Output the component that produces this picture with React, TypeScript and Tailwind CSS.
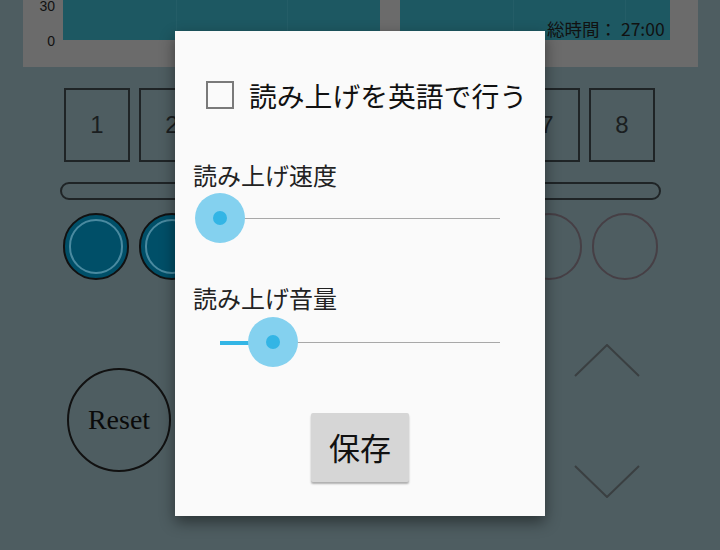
import React from "react";

const jp = { fontFamily: '"Noto Sans CJK JP", "Noto Sans", sans-serif' };

function Slider({ value }: { value: number }) {
  return (
    <div className="relative ml-[45px] h-[52px] w-[280px]">
      <div className="absolute left-0 right-0 top-[25px] h-px bg-[#a8a8a8]" />
      {value > 0 && (
        <div
          className="absolute left-0 top-[24px] h-[4px] bg-[#33b5e5]"
          style={{ width: value }}
        />
      )}
      <div
        className="absolute top-0 h-[50px] w-[50px] rounded-full bg-[#84d1ef]"
        style={{ left: value - 25 }}
      />
      <div
        className="absolute top-[18px] h-[14px] w-[14px] rounded-full bg-[#33b5e5]"
        style={{ left: value - 7 }}
      />
    </div>
  );
}

export default function App() {
  const nums = [1, 2, 3, 4, 5, 6, 7, 8];
  return (
    <div
      className="relative h-[550px] w-[720px] overflow-hidden bg-[#4e5d61]"
      style={{ fontFamily: '"Liberation Sans", "Noto Sans CJK JP", sans-serif' }}
    >
      {/* chart panel */}
      <div className="relative ml-[23px] flex h-[67px] w-[675px] bg-[#6b6b6b]">
        <div className="relative w-[40px] text-[14px] leading-[16px] text-[#111]">
          <span className="absolute right-[8px] top-[-2px]">30</span>
          <span className="absolute right-[8px] top-[33px]">0</span>
        </div>
        <div className="relative h-[40px] w-[317px] bg-[#1d5862]">
          <div className="absolute left-[113px] top-0 h-full w-px bg-[#245d67]" />
          <div className="absolute left-[224px] top-0 h-full w-px bg-[#245d67]" />
        </div>
        <div className="w-[20px]" />
        <div className="relative h-[40px] w-[270px] bg-[#1d5862]">
          <div className="absolute left-[113px] top-0 h-full w-px bg-[#245d67]" />
          <div className="absolute left-[225px] top-0 h-full w-px bg-[#245d67]" />
        </div>
        <span
          className="absolute left-[524px] top-[19px] text-[17.5px] leading-[20px] text-[#111]"
          style={jp}
        >
          総時間： 27:00
        </span>
      </div>

      {/* number boxes */}
      <div className="ml-[64px] mt-[21px] flex gap-[9px]">
        {nums.map((n) => (
          <div
            key={n}
            className="flex h-[74px] w-[66px] items-center justify-center border-2 border-[#1f2426] text-[24px] text-[#1a1e20]"
          >
            {n}
          </div>
        ))}
      </div>

      {/* progress bar */}
      <div className="ml-[60px] mt-[20px] h-[18px] w-[601px] rounded-full border-2 border-[#1f2426]" />

      {/* circles */}
      <div className="ml-[63px] mt-[13px] flex gap-[9.5px]">
        {nums.map((n) =>
          n <= 2 ? (
            <div
              key={n}
              className="flex h-[67px] w-[66px] items-center justify-center rounded-full border-2 border-[#111] bg-[#004f68]"
            >
              <div className="h-[55px] w-[54px] rounded-full border-2 border-[#4a8aa0]" />
            </div>
          ) : (
            <div
              key={n}
              className="h-[67px] w-[66px] rounded-full border-2 border-[#463f45]"
            />
          )
        )}
      </div>

      {/* bottom row */}
      <div className="mt-[64px] flex">
        <div className="ml-[67px] mt-[24px] flex h-[104px] w-[104px] items-center justify-center rounded-full border-2 border-[#111]">
          <span
            className="text-[28px] text-[#0a0a0a]"
            style={{ fontFamily: '"Liberation Serif", "DejaVu Serif", serif' }}
          >
            Reset
          </span>
        </div>
        <div className="ml-[403px] flex flex-col">
          <svg width="66" height="34" viewBox="0 0 66 34">
            <polyline points="1,32 33,1 65,32" fill="none" stroke="#3a3f41" strokeWidth="2" />
          </svg>
          <svg className="mt-[86px]" width="66" height="34" viewBox="0 0 66 34">
            <polyline points="1,2 33,33 65,2" fill="none" stroke="#3a3f41" strokeWidth="2" />
          </svg>
        </div>
      </div>

      {/* dialog */}
      <div
        className="absolute left-[175px] top-[31px] flex h-[485px] w-[370px] flex-col bg-[#fafafa] shadow-[0_6px_14px_rgba(0,0,0,0.45)]"
        style={jp}
      >
        <div className="ml-[31px] mt-[49px] flex h-[30px] items-center">
          <div className="h-[28px] w-[28px] border-2 border-[#7a7a7a]" />
          <span className="ml-[15px] text-[27.8px] leading-[30px] text-[#111]">
            読み上げを英語で行う
          </span>
        </div>
        <div className="ml-[18px] mt-[51px] text-[24px] leading-[28px] text-[#222]">
          読み上げ速度
        </div>
        <div className="mt-[4px]">
          <Slider value={0} />
        </div>
        <div className="ml-[18px] mt-[39px] text-[24px] leading-[28px] text-[#222]">
          読み上げ音量
        </div>
        <div className="mt-[5px]">
          <Slider value={53} />
        </div>
        <div className="mt-[44px] flex justify-center">
          <div className="flex h-[69px] w-[98px] items-center justify-center rounded-[2px] bg-[#d6d6d6] text-[31px] text-[#111] shadow-[0_2px_2px_rgba(0,0,0,0.3)]">
            保存
          </div>
        </div>
      </div>
    </div>
  );
}
